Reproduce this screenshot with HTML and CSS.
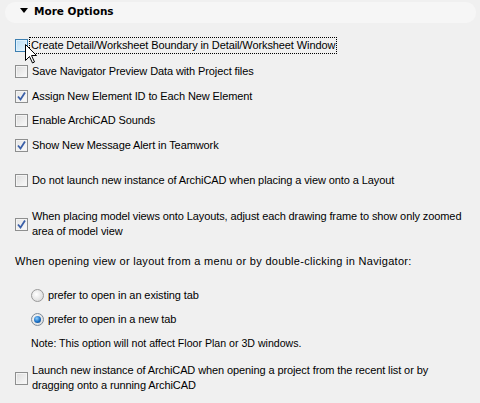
FILE: index.html
```html
<!DOCTYPE html>
<html>
<head>
<meta charset="utf-8">
<link rel="stylesheet" href="styles.css">
</head>
<body>
<div class="panel">
  <div class="header">
    <span class="tri"></span>
    <span class="title">More Options</span>
  </div>
  <div class="list">
    <div class="row mt14">
      <span class="cb hover"></span>
      <span class="label focus">Create Detail/Worksheet Boundary in Detail/Worksheet Window</span>
      <svg class="cursor" width="13" height="20" viewBox="0 0 13 20"><path d="M0.5 0.5 L0.5 16.5 L4.5 12.5 L7.5 19 L9.5 18 L6.5 11.5 L11.5 11.5 Z" fill="#fff" stroke="#000" stroke-width="1" stroke-linejoin="miter"/></svg>
    </div>
    <div class="row mt10">
      <span class="cb"></span>
      <span class="label">Save Navigator Preview Data with Project files</span>
    </div>
    <div class="row mt9">
      <span class="cb checked"><svg width="11" height="11" viewBox="0 0 11 11"><path d="M2 5.5 L4.5 8.5 L9 1.5" fill="none" stroke="#3a5fa8" stroke-width="1.8"/></svg></span>
      <span class="label">Assign New Element ID to Each New Element</span>
    </div>
    <div class="row mt8">
      <span class="cb"></span>
      <span class="label">Enable ArchiCAD Sounds</span>
    </div>
    <div class="row mt9">
      <span class="cb checked"><svg width="11" height="11" viewBox="0 0 11 11"><path d="M2 5.5 L4.5 8.5 L9 1.5" fill="none" stroke="#3a5fa8" stroke-width="1.8"/></svg></span>
      <span class="label">Show New Message Alert in Teamwork</span>
    </div>
    <div class="row mt19">
      <span class="cb"></span>
      <span class="label">Do not launch new instance of ArchiCAD when placing a view onto a Layout</span>
    </div>
    <div class="row mt21">
      <span class="cb checked"><svg width="11" height="11" viewBox="0 0 11 11"><path d="M2 5.5 L4.5 8.5 L9 1.5" fill="none" stroke="#3a5fa8" stroke-width="1.8"/></svg></span>
      <span class="label">When placing model views onto Layouts, adjust each drawing frame to show only zoomed<br>area of model view</span>
    </div>
    <div class="text mt14">When opening view or layout from a menu or by double-clicking in Navigator:</div>
    <div class="row indent mt18">
      <span class="radio"></span>
      <span class="label">prefer to open in an existing tab</span>
    </div>
    <div class="row indent mt8">
      <span class="radio on"><span class="dot"></span></span>
      <span class="label">prefer to open in a new tab</span>
    </div>
    <div class="note mt9">Note: This option will not affect Floor Plan or 3D windows.</div>
    <div class="row mt13">
      <span class="cb"></span>
      <span class="label">Launch new instance of ArchiCAD when opening a project from the recent list or by<br>dragging onto a running ArchiCAD</span>
    </div>
  </div>
</div>
</body>
</html>
```
FILE: styles.css
```css
html, body {
  margin: 0;
  padding: 0;
}
body {
  background: #f0f0f0;
  width: 480px;
  height: 403px;
  overflow: hidden;
  font-family: "Liberation Sans", Arial, sans-serif;
  font-size: 11px;
  letter-spacing: -0.1px;
  color: #000;
}
.panel {
  display: flex;
  flex-direction: column;
}
.header {
  margin: 2px 4px 0 5px;
  height: 21px;
  border-radius: 10px;
  background: #f6f6f6;
  display: flex;
  align-items: center;
  padding-left: 15px;
}
.tri {
  width: 0;
  height: 0;
  border-left: 4.5px solid transparent;
  border-right: 4.5px solid transparent;
  border-top: 5px solid #000;
  margin-right: 6px;
  margin-top: -4px;
}
.title {
  font-family: "DejaVu Sans", sans-serif;
  font-weight: bold;
  font-size: 10.5px;
  letter-spacing: 0;
  margin-top: -4px;
}
.list {
  display: flex;
  flex-direction: column;
  padding-left: 15px;
}
.row {
  display: flex;
  align-items: center;
  position: relative;
  min-height: 16px;
}
.label {
  line-height: 15px;
  margin-left: 3px;
  padding: 0 1px;
}
.focus {
  outline: 1px dotted #000;
  outline-offset: 0;
  margin-left: 2px;
}
.indent {
  padding-left: 16px;
}
.cb {
  width: 11px;
  height: 11px;
  border: 1px solid #8e8f8f;
  background: linear-gradient(135deg, #dcdcdc 0%, #f4f4f4 80%, #fafafa 100%);
  box-shadow: inset 0 0 0 1px #f4f4f4;
  flex: none;
  display: flex;
  align-items: center;
  justify-content: center;
}
.cb.hover {
  border-color: #3c7fb1;
  background: linear-gradient(135deg, #b9dcf3 0%, #dff1fd 80%, #eaf6fd 100%);
  box-shadow: inset 0 0 0 1px #def1fd;
}
.cb.checked {
  background: linear-gradient(135deg, #e4e4e4 0%, #f6f6f6 80%);
}
.radio {
  width: 11px;
  height: 11px;
  border: 1px solid #9a9a9a;
  border-radius: 50%;
  background: radial-gradient(circle at 40% 40%, #ffffff 0%, #e6e6e6 55%, #d4d4d4 100%);
  flex: none;
  display: flex;
  align-items: center;
  justify-content: center;
}
.radio.on {
  border-color: #7c8a99;
}
.dot {
  width: 7px;
  height: 7px;
  border-radius: 50%;
  background: radial-gradient(circle at 40% 35%, #8fd0ff 0%, #1a6fc4 55%, #0b3f7a 100%);
}
.text {
  line-height: 16px;
  letter-spacing: 0.3px;
}
.note {
  font-size: 10.6px;
  letter-spacing: 0;
  line-height: 14px;
  padding-left: 16px;
}
.cursor {
  position: absolute;
  left: 10px;
  top: 7px;
}
.mt8 { margin-top: 8px; }
.mt9 { margin-top: 9px; }
.mt10 { margin-top: 10px; }
.mt13 { margin-top: 13px; }
.mt14 { margin-top: 14px; }
.mt15 { margin-top: 15px; }
.mt18 { margin-top: 18px; }
.mt19 { margin-top: 19px; }
.mt21 { margin-top: 21px; }
```
